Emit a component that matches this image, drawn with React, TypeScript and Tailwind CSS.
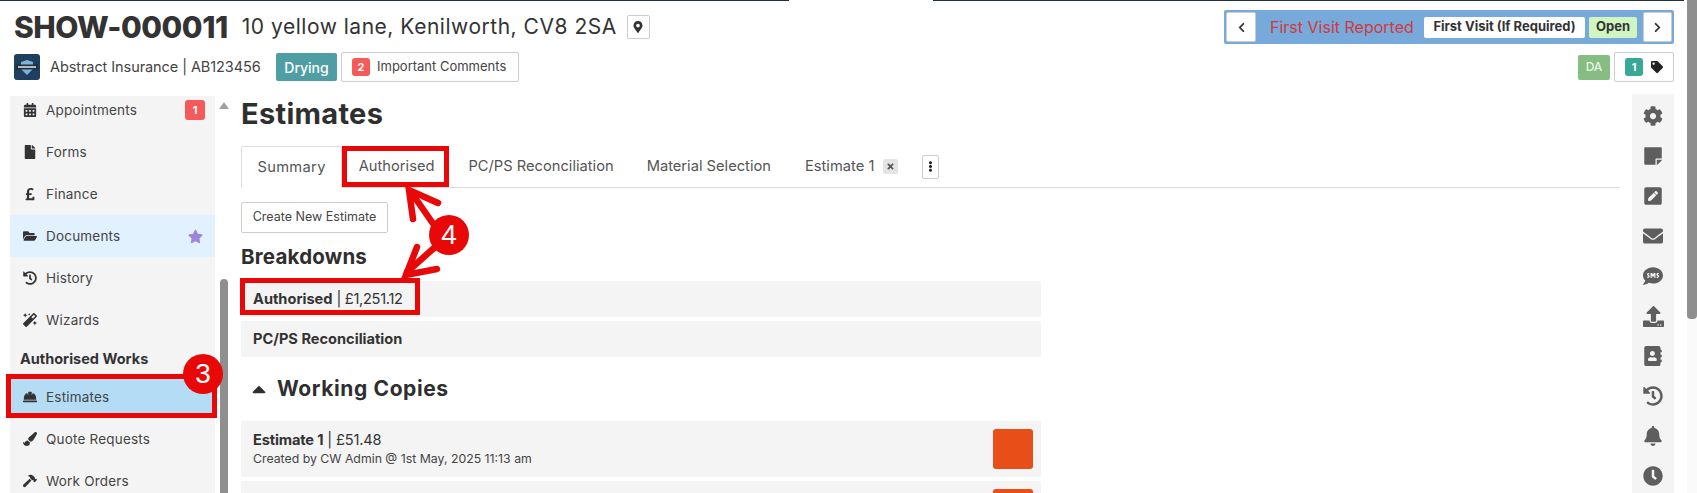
import React from "react";
import {
  FaCalendarAlt, FaFile, FaPoundSign, FaFolderOpen, FaStar, FaHistory, FaMagic, FaHardHat, FaPaintBrush, FaHammer,
  FaCog, FaStickyNote, FaPenSquare, FaEnvelope, FaSms, FaAddressBook, FaBell, FaClock, FaMapMarkerAlt, FaTag,
  FaEllipsisV, FaTimes, FaCaretUp, FaChevronLeft, FaChevronRight,
} from "react-icons/fa";

function SideItem({ icon, label, active, tint, right }: { icon: React.ReactNode; label: string; active?: boolean; tint?: boolean; right?: React.ReactNode }) {
  return (
    <div className={`flex items-center shrink-0 h-[42px] pl-[12px] pr-[10px] ${active ? "bg-[#b5dcf5]" : tint ? "bg-[#e1f1fd]" : ""}`}>
      <span className="w-[22px] flex justify-start pl-[1px] text-[14px] text-[#333]">{icon}</span>
      <span className="ml-[2px] text-[13.5px] text-[#444] tracking-[0.2px]">{label}</span>
      <span className="ml-auto">{right}</span>
    </div>
  );
}

function UploadIcon() {
  return (
    <svg viewBox="0 0 512 512" className="w-[21px] h-[21px]" fill="currentColor">
      <path d="M296 384h-80c-13.3 0-24-10.7-24-24V192h-87.700c-17.800 0-26.700-21.500-14.100-34.100L242.300 5.700c7.500-7.500 19.800-7.500 27.300 0l152.200 152.200c12.600 12.600 3.700 34.100-14.100 34.100H320v168c0 13.300-10.700 24-24 24zm216-8v112c0 13.300-10.700 24-24 24H24c-13.300 0-24-10.700-24-24V376c0-13.300 10.700-24 24-24h136v8c0 30.900 25.100 56 56 56h80c30.900 0 56-25.100 56-56v-8h136c13.300 0 24 10.700 24 24zm-124 88c0-11-9-20-20-20s-20 9-20 20 9 20 20 20 20-9 20-20zm64 0c0-11-9-20-20-20s-20 9-20 20 9 20 20 20 20-9 20-20z" />
    </svg>
  );
}

function RedBox({ className }: { className: string }) {
  return <div className={`absolute border-[5px] border-[#e80808] ${className}`} />;
}

function Circle({ n, className }: { n: string; className: string }) {
  return (
    <div className={`absolute w-[40px] h-[40px] rounded-full bg-[#e80808] text-white flex items-center justify-center text-[28px] font-['Liberation_Sans',sans-serif] ${className}`}>
      {n}
    </div>
  );
}

export default function App() {
  const right = [
    <FaCog />, <FaStickyNote />, <FaPenSquare />, <FaEnvelope />, <FaSms />, <UploadIcon />, <FaAddressBook />, <FaHistory />, <FaBell />, <FaClock />,
  ];
  return (
    <div className="relative w-[1697px] h-[493px] overflow-hidden bg-white flex font-['Inter',sans-serif] text-[#333]">
      <div className="w-[1687px] flex flex-col">
        {/* top rule */}
        <div className="flex h-[1px] shrink-0">
          <div className="w-[789px] bg-[#1f3242]" />
          <div className="w-[144px]" />
          <div className="w-[751px] bg-[#1f3242]" />
        </div>

        {/* header */}
        <div className="h-[94px] shrink-0 pl-[14px] pr-[13px] flex justify-between">
          <div>
            <div className="flex items-center h-[43px] pt-[9px]">
              <span className="text-[30px] font-extrabold tracking-[-0.45px] text-[#333] leading-none">SHOW-000011</span>
              <span className="ml-[14px] text-[21px] text-[#333] tracking-[0.52px] whitespace-nowrap">10 yellow lane, Kenilworth, CV8 2SA</span>
              <span className="ml-[10px] w-[23px] h-[24px] border border-[#ccc] rounded-[2px] flex items-center justify-center text-[12px]"><FaMapMarkerAlt /></span>
            </div>
            <div className="flex items-center h-[30px] mt-[8px]">
              <div className="w-[26px] h-[26px] rounded-[3px] bg-[#1e3f5e] flex items-center justify-center">
                <svg viewBox="0 0 26 26" className="w-[26px] h-[26px]">
                  <path d="M7 8 L13 6 L19 8 L19 15 L13 21 L7 15 Z" fill="#7fb2d8" />
                  <rect x="2" y="10.500" width="22" height="5" fill="#20303e" />
                  <rect x="4" y="12.200" width="18" height="1.600" fill="#d5dde4" />
                </svg>
              </div>
              <span className="ml-[10px] w-[226px] text-[14.5px] text-[#444] tracking-[-0.08px] whitespace-nowrap">Abstract Insurance | AB123456</span>
              <span className="w-[61px] h-[28px] bg-[#4f9ea3] rounded-[2px] text-white text-[14px] font-medium flex items-center justify-center">Drying</span>
              <span className="ml-[4px] w-[178px] h-[30px] border border-[#ccc] rounded-[2px] flex items-center pl-[10px]">
                <span className="w-[18px] h-[18px] bg-[#f55a5a] rounded-[3px] text-white text-[11px] font-bold flex items-center justify-center">2</span>
                <span className="ml-[7px] text-[13px] text-[#444] whitespace-nowrap">Important Comments</span>
              </span>
            </div>
          </div>
          <div className="flex flex-col items-end pt-[9px]">
            <div className="w-[450px] h-[34px] bg-[#77a9db] rounded-[2px] flex items-center px-[2px]">
              <span className="w-[30px] h-[30px] bg-white border border-[#ccc] rounded-[2px] flex items-center justify-center text-[11px] text-[#333]"><FaChevronLeft /></span>
              <span className="ml-[14px] text-[16px] text-[#d23a3a] w-[154px] whitespace-nowrap">First Visit Reported</span>
              <span className="w-[161px] h-[21px] bg-white rounded-[2px] text-[13px] font-bold text-[#333] flex items-center justify-center whitespace-nowrap">First Visit (If Required)</span>
              <span className="ml-[4px] w-[48px] h-[21px] bg-[#d0f5c0] rounded-[2px] text-[13px] font-bold text-[#333] flex items-center justify-center">Open</span>
              <span className="ml-[6px] w-[29px] h-[30px] bg-white border border-[#ccc] rounded-[2px] flex items-center justify-center text-[11px] text-[#333]"><FaChevronRight /></span>
            </div>
            <div className="flex items-center mt-[8px]">
              <span className="w-[32px] h-[25px] bg-[#85bd82] rounded-[2px] text-[#e8f5e6] text-[12px] font-medium flex items-center justify-center">DA</span>
              <span className="ml-[4px] w-[60px] h-[30px] border border-[#ccc] rounded-[2px] flex items-center pl-[10px]">
                <span className="w-[18px] h-[18px] bg-[#3aa896] rounded-[3px] text-white text-[11px] font-bold flex items-center justify-center">1</span>
                <FaTag className="ml-[8px] text-[12px] text-[#222]" />
              </span>
            </div>
          </div>
        </div>

        {/* body */}
        <div className="flex-1 flex min-h-0">
          {/* left nav, scrolled so the first row starts slightly clipped */}
          <div className="w-[205px] ml-[10px] mt-[1px] bg-[#f4f4f4] overflow-hidden">
            <div className="flex flex-col -mt-[7px]">
              <SideItem icon={<FaCalendarAlt />} label="Appointments" right={<span className="w-[20px] h-[20px] bg-[#f55a5a] rounded-[3px] text-white text-[11px] font-bold flex items-center justify-center">1</span>} />
              <SideItem icon={<FaFile />} label="Forms" />
              <SideItem icon={<FaPoundSign />} label="Finance" />
              <SideItem icon={<FaFolderOpen />} label="Documents" tint right={<FaStar className="text-[15px] text-[#a084dc] mr-[2px]" />} />
              <SideItem icon={<FaHistory />} label="History" />
              <SideItem icon={<FaMagic />} label="Wizards" />
              <div className="h-[35px] shrink-0 pl-[10px] flex items-center text-[14.5px] font-bold text-[#333]">Authorised Works</div>
              <SideItem icon={<FaHardHat />} label="Estimates" active />
              <SideItem icon={<FaPaintBrush />} label="Quote Requests" />
              <SideItem icon={<FaHammer />} label="Work Orders" />
            </div>
          </div>
          {/* nav scrollbar */}
          <div className="w-[11px] ml-[3px] flex flex-col items-center mt-[7px]">
            <span className="w-0 h-0 border-l-[5px] border-r-[5px] border-b-[7px] border-l-transparent border-r-transparent border-b-[#a0a0a0]" />
            <span className="w-[8px] flex-1 mt-[170px] bg-[#8f8f8f] rounded-t-[4px]" />
          </div>

          {/* main */}
          <div className="flex-1 min-w-0 ml-[12px]">
            <h1 className="text-[29px] font-bold text-[#2f2f2f] leading-[38px] tracking-[0.3px]">Estimates</h1>
            <div className="mt-[13px] h-[42px] w-[1379px] border-b border-[#ddd] flex items-stretch text-[14.7px] text-[#555] whitespace-nowrap">
              <span className="px-[15.5px] border border-b-0 border-[#ddd] bg-white flex items-center rounded-t-[2px] mb-[-1px] tracking-[0.3px]">Summary</span>
              <span className="pl-[16.5px] pr-[17.5px] flex items-center">Authorised</span>
              <span className="px-[16.5px] flex items-center">PC/PS Reconciliation</span>
              <span className="pl-[16.5px] pr-[17.5px] flex items-center">Material Selection</span>
              <span className="pl-[16.5px] flex items-center">Estimate 1</span>
              <span className="ml-[9px] self-center w-[15px] h-[15px] bg-[#e4e4e4] rounded-[2px] flex items-center justify-center text-[9px] text-[#555]"><FaTimes /></span>
              <span className="ml-[24px] self-center w-[17px] h-[24px] border border-[#ccc] rounded-[2px] flex items-center justify-center text-[11px] text-[#222]"><FaEllipsisV /></span>
            </div>
            <div className="mt-[14px] w-[147px] h-[31px] border border-[#ccc] rounded-[2px] flex items-center justify-center text-[12.5px] text-[#444] whitespace-nowrap">Create New Estimate</div>
            <h2 className="mt-[11px] text-[20.5px] font-bold text-[#2f2f2f] leading-[26px] tracking-[0.2px]">Breakdowns</h2>
            <div className="mt-[11px] w-[800px] flex flex-col gap-[4px]">
              <div className="h-[36px] shrink-0 bg-[#f4f4f4] rounded-[2px] flex items-center px-[12px] pt-[1px] text-[14.6px] text-[#333]"><b>Authorised</b><span className="ml-[4px] tracking-[-0.3px]">| £1,251.12</span></div>
              <div className="h-[36px] shrink-0 bg-[#f4f4f4] rounded-[2px] flex items-center px-[12px] pt-[1px] text-[14.6px] font-bold text-[#333]">PC/PS Reconciliation</div>
            </div>
            <div className="mt-[17px] h-[30px] w-[800px] flex items-center pl-[12px] text-[#2f2f2f]">
              <FaCaretUp className="text-[22px] -ml-[5px]" />
              <span className="ml-[7px] text-[21px] font-bold tracking-[0.6px]">Working Copies</span>
            </div>
            <div className="mt-[17px] w-[800px] flex flex-col gap-[4px]">
              <div className="h-[56px] shrink-0 bg-[#f4f4f4] rounded-[2px] flex items-center pl-[12px] pr-[8px]">
                <div>
                  <div className="text-[14.6px] text-[#333] leading-[20px] tracking-[-0.15px]"><b>Estimate 1</b> | £51.48</div>
                  <div className="text-[12.3px] text-[#444] leading-[18px]">Created by CW Admin @ 1st May, 2025 11:13 am</div>
                </div>
                <span className="ml-auto w-[40px] h-[40px] bg-[#e84e17] rounded-[3px]" />
              </div>
              <div className="h-[56px] shrink-0 bg-[#f4f4f4] rounded-[2px] flex pl-[12px] pr-[8px] pt-[8px]">
                <span className="ml-auto w-[40px] h-[40px] bg-[#e84e17] rounded-[3px]" />
              </div>
            </div>
          </div>

          {/* right rail */}
          <div className="w-[42px] mr-[13px] mt-[-1px] pt-[2px] bg-[#f4f4f4] overflow-hidden flex flex-col items-center text-[#5e5e5e]">
            {right.map((ic, i) => (
              <span key={i} className="h-[40px] shrink-0 w-full flex items-center justify-center text-[20px]">{ic}</span>
            ))}
          </div>
        </div>
      </div>

      {/* page scrollbar */}
      <div className="w-[10px] bg-[#fafafa]">
        <div className="h-[319px] bg-[#8f8f8f] rounded-b-[4px]" />
      </div>

      {/* tutorial annotations */}
      <RedBox className="left-[342px] top-[146px] w-[107px] h-[41px]" />
      <RedBox className="left-[240px] top-[278px] w-[180px] h-[37px]" />
      <RedBox className="left-[6px] top-[374px] w-[211px] h-[44px]" />
      <svg className="absolute left-0 top-0 w-[1697px] h-[493px] pointer-events-none" viewBox="0 0 1697 493" fill="none" stroke="#e80808" strokeWidth="6.500" strokeLinecap="round" strokeLinejoin="miter">
        <path d="M434 225 L411 192" />
        <path d="M413 219 L409 190 L438 203" />
        <path d="M434 248 L407 272" />
        <path d="M417 247 L406 275 L437 269" />
      </svg>
      <Circle n="4" className="left-[429px] top-[215px]" />
      <Circle n="3" className="left-[183px] top-[354px]" />
    </div>
  );
}
